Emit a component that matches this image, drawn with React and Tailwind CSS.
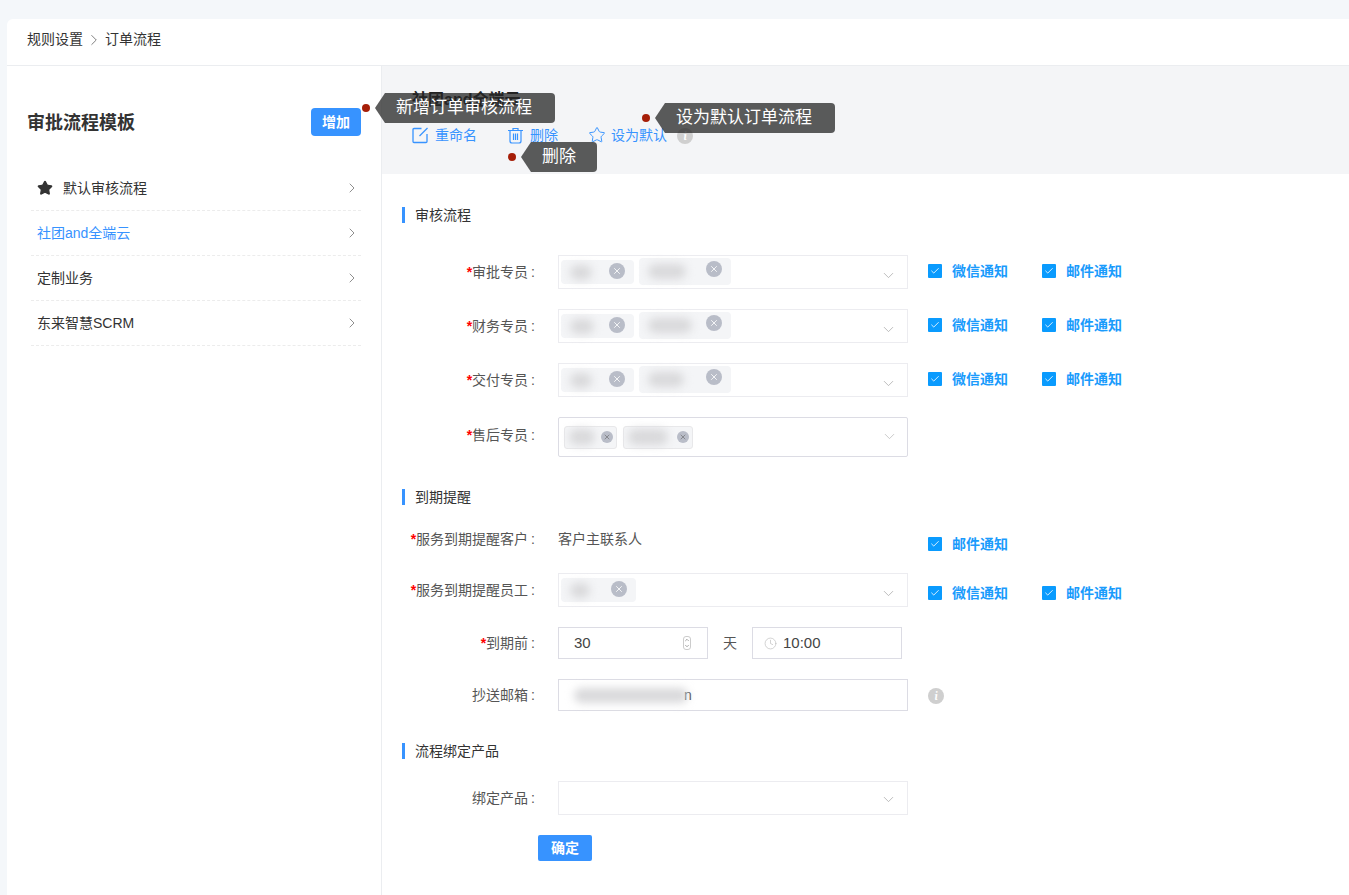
import React from "react";
import { ChevronRight, ChevronDown, Check, Star, Clock, X } from "lucide-react";

const menuItems = [
  { name: "默认审核流程", star: true },
  { name: "社团and全端云", active: true },
  { name: "定制业务" },
  { name: "东来智慧SCRM" },
];

const Info = ({ className }) => (
  <span className={`flex h-4 w-4 items-center justify-center rounded-full bg-[#cfcfcf] font-serif text-[11px] font-bold italic leading-none text-white ${className || ""}`}>
    i
  </span>
);

const EditIcon = () => (
  <svg width="17" height="17" viewBox="0 0 17 17" fill="none" stroke="#3793ff" strokeWidth="1.3" className="mr-[6px]">
    <path d="M9.5 1.5H2a1 1 0 0 0-1 1v12a1 1 0 0 0 1 1h12a1 1 0 0 0 1-1V7" />
    <path d="M15.5 1 7.5 9" />
  </svg>
);

const TrashIcon = () => (
  <svg width="17" height="17" viewBox="0 0 17 17" fill="none" stroke="#3793ff" strokeWidth="1.2" className="mr-[6px]">
    <path d="M1 3.5h15M6 3.5V1.5h5v2" />
    <path d="M3 3.5v10.5a2 2 0 0 0 2 2h7a2 2 0 0 0 2-2V3.5" />
    <path d="M6.5 6.5v6.5M8.5 6.5v6.5M10.5 6.5v6.5" />
  </svg>
);

const Heading = ({ children, className }) => (
  <div className={`flex h-4 items-center border-l-[3px] border-[#3793ff] pl-[10px] text-sm text-[#333] ${className || ""}`}>
    {children}
  </div>
);

const Label = ({ children, required, className }) => (
  <div className={`mr-[20px] w-[156px] shrink-0 pr-[3px] text-right text-sm text-[#555] ${className || ""}`}>
    {required && <span className="font-bold text-[#f00]">*</span>}
    {children}
    <span className="ml-[3px]">:</span>
  </div>
);

const Notify = ({ children, className }) => (
  <div className={`flex items-center ${className || ""}`}>
    <span className="flex h-[14px] w-[14px] items-center justify-center rounded-[1px] bg-[#0a9bfe]">
      <Check size={10} color="#fff" strokeWidth={2} />
    </span>
    <span className="ml-[10px] text-sm font-bold text-[#1a9bfc]">{children}</span>
  </div>
);

const Chip = ({ w, blur, h }) => (
  <div className={`relative flex items-center rounded-[4px] bg-[#f4f5f7] ${w} ${h}`}>
    <span className={`ml-[9px] h-[15px] rounded-full bg-[#d9d9db] blur-[4px] ${blur}`} />
    <span className="absolute right-[9px] top-[3px] flex h-4 w-4 items-center justify-center rounded-full bg-[#b9bdc8]">
      <X size={10} color="#fff" strokeWidth={2} />
    </span>
  </div>
);

const PeopleSelect = ({ children }) => (
  <div className="flex h-[34px] w-[350px] shrink-0 items-start gap-[5px] border border-[#ececf0] pl-[2px] pt-[2px]">
    {children}
    <ChevronDown size={17} color="#aaa" strokeWidth={1.1} className="ml-auto mr-[10px] mt-[9px]" />
  </div>
);

const Staff = ({ label, blurA, blurB }) => (
  <div className="mb-[20px] flex h-[34px] items-center">
    <Label required>{label}</Label>
    <PeopleSelect>
      <div className="mt-[2px]"><Chip w="w-[73px]" h="h-[24px]" blur={blurA} /></div>
      <Chip w="w-[92px]" h="h-[27px]" blur={blurB} />
    </PeopleSelect>
    <Notify className="ml-[20px] w-[114px] -translate-y-[1px]">微信通知</Notify>
    <Notify className="-translate-y-[1px]">邮件通知</Notify>
  </div>
);

const SmallChip = ({ w, blur }) => (
  <div className={`flex h-[23px] items-center justify-between rounded-[3px] border border-[#e8e8ea] bg-[#f4f5f7] pl-[4px] pr-[3px] ${w}`}>
    <span className={`h-[16px] rounded-full bg-[#d9d9db] blur-[4px] ${blur}`} />
    <span className="flex h-3 w-3 items-center justify-center rounded-full bg-[#b9bdc8]">
      <X size={8} color="#555" strokeWidth={1.5} />
    </span>
  </div>
);

const Callout = ({ children, className, width }) => (
  <div className={`absolute z-10 flex items-center ${className}`}>
    <span className="h-2 w-2 rounded-full bg-[#a61e08]" />
    <span className="ml-[5px] h-[30px] w-[10px] bg-[#252525]/75 [clip-path:polygon(100%_0,100%_100%,0_50%)]" />
    <span className={`flex h-[30px] items-center rounded-r-[4px] bg-[#252525]/75 pl-[11px] text-[17px] text-white ${width}`}>
      {children}
    </span>
  </div>
);

const Action = ({ icon, children, className }) => (
  <div className={`flex items-center text-sm text-[#3793ff] ${className || ""}`}>
    {icon}
    {children}
  </div>
);

export default function App() {
  return (
    <div className="min-h-[895px] overflow-hidden bg-[#f4f7fa] pl-[7px] pt-[19px] font-['Liberation_Sans','Noto_Sans_CJK_SC',sans-serif]">
      <div className="relative rounded-tl-[6px] bg-white">
        <div className="flex h-[47px] items-center border-b border-[#ebedf0] pb-[6px] pl-[20px] text-sm text-[#333]">
          规则设置
          <ChevronRight size={18} color="#555" strokeWidth={1} className="mx-[2px] mt-[2px]" />
          订单流程
        </div>

        <div className="flex h-[829px]">
          <aside className="w-[375px] shrink-0 border-r border-[#ebedf0] pl-[21px] pr-[20px]">
            <div className="mt-[42px] flex h-[28px] items-center justify-between">
              <h2 className="-ml-[1px] mt-[2px] text-lg font-semibold text-[#333]">审批流程模板</h2>
              <button className="h-[28px] w-[50px] rounded-[4px] bg-[#3793ff] text-sm font-bold text-white">增加</button>
            </div>
            <ul className="ml-[3px] mt-[30px]">
              {menuItems.map((item) => (
                <li
                  key={item.name}
                  className={`flex h-[45px] items-center justify-between border-b border-dashed border-[#ececec] pl-[6px] pr-[2px] text-sm ${item.active ? "text-[#3793ff]" : "text-[#333]"}`}
                >
                  <span className="flex items-center">
                    {item.star && <Star size={16} fill="#333" color="#333" className="mr-[10px]" />}
                    {item.name}
                  </span>
                  <ChevronRight size={16} color="#666" strokeWidth={1.1} className="-mr-[1px]" />
                </li>
              ))}
            </ul>
          </aside>

          <main className="min-w-0 flex-1">
            <div className="h-[108px] bg-[#f4f5f7] pl-[30px] pt-[22px]">
              <div className="text-base font-bold leading-6 text-[#222]">社团and全端云</div>
              <div className="mt-[11px] flex h-[24px] items-center">
                <Action className="w-[95px]" icon={<EditIcon />}>重命名</Action>
                <Action className="w-[81px]" icon={<TrashIcon />}>删除</Action>
                <Action icon={<Star size={18} strokeWidth={1.3} className="mr-[5px]" />}>设为默认</Action>
                <Info className="ml-[10px] mt-[2px]" />
              </div>
            </div>

            <Heading className="ml-[20px] mt-[33px]">审核流程</Heading>
            <div className="mt-[32px]">
              <Staff label="审批专员" blurA="w-[22px]" blurB="w-[38px]" />
              <Staff label="财务专员" blurA="w-[24px]" blurB="w-[44px]" />
              <Staff label="交付专员" blurA="w-[22px]" blurB="w-[36px]" />
              <div className="flex h-[40px] items-center">
                <Label required className="-translate-y-[2px]">售后专员</Label>
                <div className="flex h-[40px] w-[350px] items-center gap-[6px] rounded-[2px] border border-[#dcdce4] pl-[5px]">
                  <SmallChip w="w-[53px]" blur="w-[26px]" />
                  <SmallChip w="w-[70px]" blur="w-[40px]" />
                  <ChevronDown size={17} color="#bbb" strokeWidth={1.1} className="ml-auto mr-[9px] -translate-y-[1px]" />
                </div>
              </div>
            </div>

            <Heading className="ml-[20px] mt-[32px]">到期提醒</Heading>
            <div className="mt-[21px]">
              <div className="mb-[20px] flex h-[27px] items-start pt-[3px]">
                <Label required>服务到期提醒客户</Label>
                <div className="w-[350px] text-sm text-[#555]">客户主联系人</div>
                <Notify className="ml-[20px] mt-[5px]">邮件通知</Notify>
              </div>

              <div className="mb-[20px] flex h-[34px] items-center">
                <Label required>服务到期提醒员工</Label>
                <PeopleSelect>
                  <div className="mt-[2px]"><Chip w="w-[75px]" h="h-[24px]" blur="w-[20px]" /></div>
                </PeopleSelect>
                <Notify className="ml-[20px] w-[114px] translate-y-[3px]">微信通知</Notify>
                <Notify className="translate-y-[3px]">邮件通知</Notify>
              </div>

              <div className="mb-[20px] flex h-[32px] items-center">
                <Label required>到期前</Label>
                <div className="flex h-[32px] w-[150px] items-center justify-between border border-[#dcdce4] pl-[15px] pr-[16px] text-[15px] text-[#444]">
                  30
                  <span className="flex h-[14px] w-[8px] flex-col items-center justify-center rounded-[3px] border border-[#ccc] text-[#555]">
                    <ChevronDown size={6} strokeWidth={2} className="rotate-180" />
                    <ChevronDown size={6} strokeWidth={2} />
                  </span>
                </div>
                <span className="w-[44px] text-center text-sm text-[#555]">天</span>
                <div className="flex h-[32px] w-[150px] items-center border border-[#dcdce4] pl-[11px] text-[15px] text-[#444]">
                  <Clock size={13} color="#bbb" strokeWidth={1.2} className="mr-[6px]" />
                  10:00
                </div>
              </div>

              <div className="flex h-[32px] items-center">
                <Label>抄送邮箱</Label>
                <div className="flex h-[32px] w-[350px] items-center border border-[#dcdce4] pl-[15px] text-sm text-[#444]">
                  <span className="h-[15px] w-[114px] rounded-full bg-[#d9d9db] blur-[4px]" />
                  <span className="-ml-[4px]">n</span>
                </div>
                <Info className="ml-[20px] mt-[2px]" />
              </div>
            </div>

            <Heading className="ml-[20px] mt-[32px]">流程绑定产品</Heading>
            <div className="mt-[22px] flex h-[34px] items-center">
              <Label>绑定产品</Label>
              <div className="flex h-[34px] w-[350px] items-center justify-end border border-[#ececf0] pr-[10px]">
                <ChevronDown size={17} color="#aaa" strokeWidth={1.1} className="translate-y-[1px]" />
              </div>
            </div>
            <button className="ml-[156px] mt-[20px] h-[26px] w-[54px] rounded-[2px] bg-[#3793ff] text-sm font-bold text-white">确定</button>
          </main>
        </div>

        <Callout className="left-[355px] top-[74px]" width="w-[170px]">新增订单审核流程</Callout>
        <Callout className="left-[635px] top-[84px]" width="w-[170px]">设为默认订单流程</Callout>
        <Callout className="left-[501px] top-[123px]" width="w-[66px]">删除</Callout>
      </div>
    </div>
  );
}
